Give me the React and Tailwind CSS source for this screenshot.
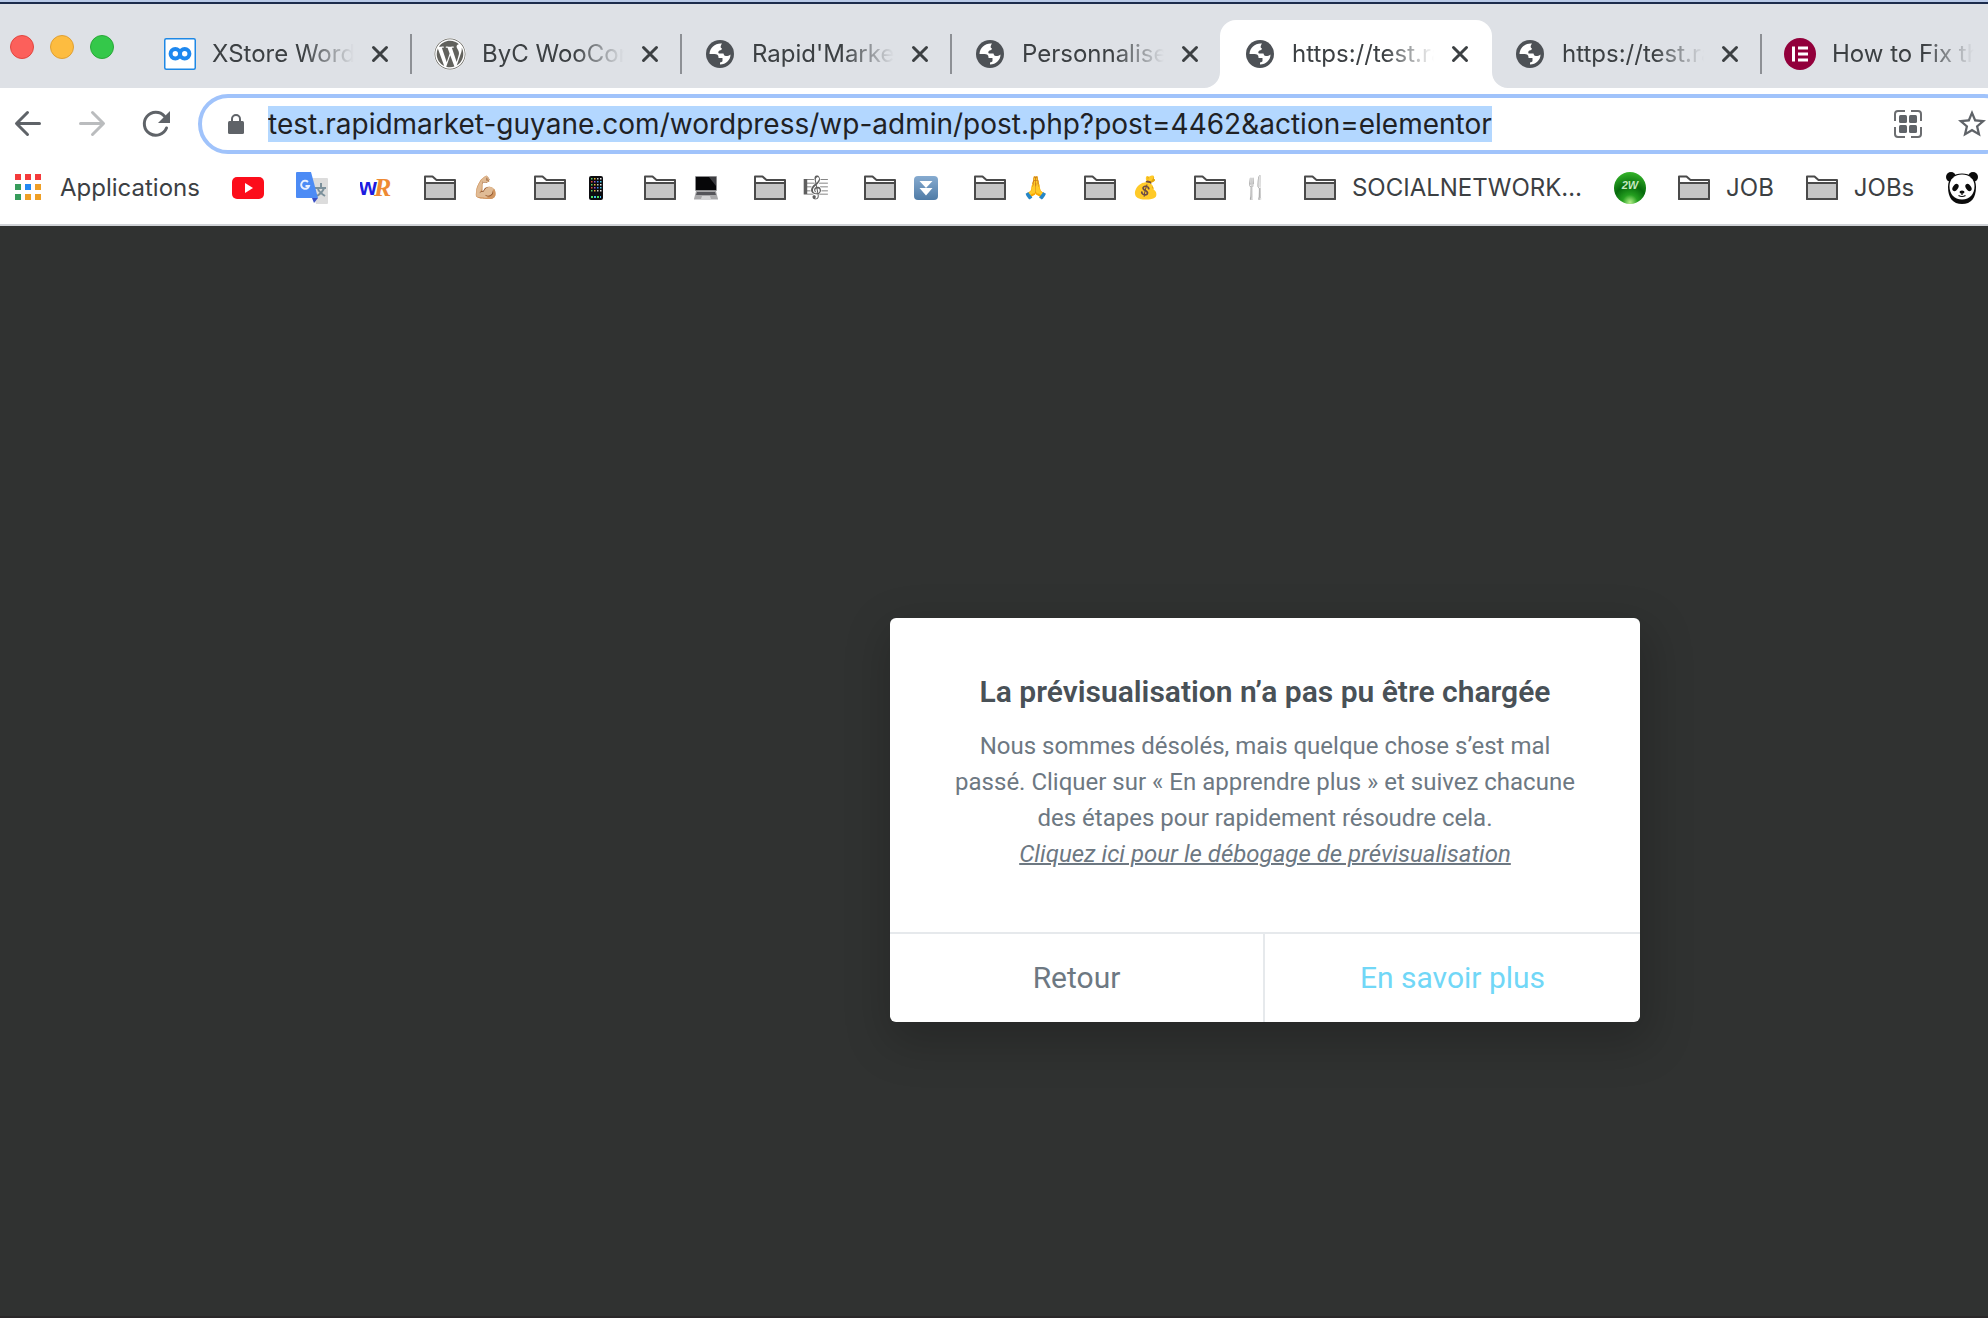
import React from 'react';
import clsx from 'clsx';
import { FaWordpress } from 'react-icons/fa';

const BOOKMARKS = [
  { id: 'apps', icon: AppsIcon, label: 'Applications' },
  { id: 'youtube', icon: YoutubeIcon, title: 'YouTube' },
  { id: 'translate', icon: TranslateIcon, title: 'Google Translate' },
  { id: 'wr', icon: WordReferenceIcon, title: 'WordReference' },
  { id: 'sport', icon: FolderIcon, emoji: '💪🏼' },
  { id: 'phone', icon: FolderIcon, mark: PhoneMark, title: 'Mobile' },
  { id: 'laptop', icon: FolderIcon, mark: LaptopMark, title: 'Laptop' },
  { id: 'music', icon: FolderIcon, emoji: '🎼', gray: true },
  { id: 'downloads', icon: FolderIcon, mark: DownMark, title: 'Downloads' },
  { id: 'thanks', icon: FolderIcon, emoji: '🙏' },
  { id: 'money', icon: FolderIcon, emoji: '💰' },
  { id: 'food', icon: FolderIcon, emoji: '🍴' },
  { id: 'social', icon: FolderIcon, label: 'SOCIALNETWORK…' },
  { id: 'green', icon: GreenBallIcon, title: '2W' },
  { id: 'job', icon: FolderIcon, label: 'JOB' },
  { id: 'jobs', icon: FolderIcon, label: 'JOBs' },
  { id: 'panda', icon: PandaIcon, title: 'Panda' },
];

const TABS = [
  { id: 1, icon: XStoreIcon, title: 'XStore WordPress' },
  { id: 2, icon: WordpressIcon, title: 'ByC WooCommerce', divider: true },
  { id: 3, icon: GlobeIcon, title: "Rapid'Market", divider: true },
  { id: 4, icon: GlobeIcon, title: 'Personnaliser', divider: true },
  { id: 5, icon: GlobeIcon, title: 'https://test.rapid', active: true },
  { id: 6, icon: GlobeIcon, title: 'https://test.rapid' },
  { id: 7, icon: ElementorIcon, title: 'How to Fix the', divider: true },
];

function XStoreIcon() {
  return (
    <svg viewBox="0 0 32 32" className="size-8">
      <rect x="0.75" y="0.75" width="30.5" height="30.5" rx="1.5" fill="#fff" stroke="#1e88e5" strokeWidth="1.5" />
      <g fill="none" stroke="#1e88ef" strokeWidth="4">
        <circle cx="11.3" cy="15.8" r="4.7" />
        <circle cx="20.7" cy="15.8" r="4.7" />
      </g>
    </svg>
  );
}

function WordpressIcon() {
  return (
    <span className="flex size-8 items-center justify-center rounded-full bg-white">
      <FaWordpress className="size-8 text-[#62625d]" />
    </span>
  );
}

function GlobeIcon() {
  return (
    <svg viewBox="-2 -2 32 32" className="size-8">
      <circle cx="14" cy="14" r="14" fill="#4d5156" />
      <path
        fill="#fff"
        d="M16 3.5C9.5 2.8 3.8 7.5 3.5 14H8.5C11 14 12.5 15 12.5 17V18H16.5V21C16.5 22 15 22 14 22.5V24.5C20 24.5 24.5 20 24.5 14.5C23 15.5 22 16 20 16C18 16 18 15 17.5 13.5H13C12 13.5 12 11 13.5 10.5C15 10.2 16 9.8 16 8.5C14.5 8 14 6.5 16 3.5Z"
      />
    </svg>
  );
}

function ElementorIcon() {
  return (
    <svg viewBox="0 0 32 32" className="size-8">
      <circle cx="16" cy="16" r="16" fill="#92003b" />
      <path fill="#fff" d="M8 8.5h3v15H8zM14 8.5h10v3H14zM14 14.5h10v3H14zM14 20.5h10v3H14z" />
    </svg>
  );
}

function AppsIcon() {
  return (
    <svg viewBox="0 0 32 32" className="size-8">
      <path fill="#f43b3b" d="M3 2h6v6H3zM13 2h6v6h-6zM23 2h6v6h-6z" />
      <path fill="#379c5b" d="M3 12h6v6H3zM3 22h6v6H3z" />
      <path fill="#2189f3" d="M13 12h6v6h-6z" />
      <path fill="#ef9f26" d="M23 12h6v6h-6zM13 22h6v6h-6zM23 22h6v6h-6z" />
    </svg>
  );
}

function YoutubeIcon() {
  return (
    <svg viewBox="0 0 32 32" className="size-8">
      <rect y="5" width="32" height="22" rx="5" fill="#fc0d1b" />
      <path fill="#fff" d="M13 11v10l8-5z" />
    </svg>
  );
}

function TranslateIcon() {
  return (
    <svg viewBox="0 0 32 32" className="size-8">
      <path fill="#dcdcdc" d="M13 6h18a1 1 0 0 1 1 1v24a1 1 0 0 1-1 1H20z" />
      <path fill="none" stroke="#7b909b" strokeWidth="2" d="M25 11v4M19 16h11M28 16c-1 4-4 6-7 8M22 17c1 3 4 5 7 7" />
      <path fill="#3a4fc4" d="M16 26h6l-4 5z" />
      <path fill="#4c8bf5" d="M1 0h14l7 26H1a1 1 0 0 1-1-1V1a1 1 0 0 1 1-1z" />
      <path fill="none" stroke="#e8f0fe" strokeWidth="2" d="M12 10a4 4 0 1 0 1 4H9.500" />
    </svg>
  );
}

function WordReferenceIcon() {
  return (
    <svg viewBox="0 0 32 32" className="size-8">
      <text x="-1" y="23" fontSize="23" fontWeight="700" fontFamily="Liberation Sans, sans-serif" fill="#1c1ce0">w</text>
      <text x="14" y="24" fontSize="26" fontWeight="700" fontStyle="italic" fontFamily="Liberation Serif, serif" fill="#ee8a33">R</text>
    </svg>
  );
}

function FolderIcon() {
  return (
    <svg viewBox="0 0 32 32" className="size-8" stroke="#4a4a4a" strokeWidth="2" strokeLinejoin="round">
      <path fill="#fff" d="M1 27V4.500H8.500L12.500 8H31V27Z" />
      <path fill="#c6c6c6" d="M1 11H31V27H1Z" />
    </svg>
  );
}

function GreenBallIcon() {
  return (
    <svg viewBox="0 0 32 32" className="size-8">
      <defs>
        <radialGradient id="ball" cx="50%" cy="95%" r="95%">
          <stop offset="0" stopColor="#b4f08a" />
          <stop offset="0.25" stopColor="#25a020" />
          <stop offset="0.55" stopColor="#066a0c" />
          <stop offset="1" stopColor="#35b52a" />
        </radialGradient>
      </defs>
      <circle cx="16" cy="16" r="16" fill="url(#ball)" />
      <text x="16" y="17" textAnchor="middle" fontSize="11" fontWeight="700" fontStyle="italic" fontFamily="Liberation Sans, sans-serif" fill="#c4e8be">2W</text>
    </svg>
  );
}

function PandaIcon() {
  return (
    <svg viewBox="0 0 32 32" className="size-8">
      <g fill="#0b0b0b">
        <circle cx="5" cy="5" r="5" />
        <circle cx="27" cy="5" r="5" />
        <path d="M2 15C2 6 8 1.500 16 1.500S30 6 30 15C30 26 25 32 16 32S2 26 2 15Z" />
      </g>
      <path fill="#fff" d="M3.500 14C3.500 7 9 2.500 16 2.500S28.500 7 28.500 14C28.500 22 24 27.500 16 27.500S3.500 22 3.500 14Z" />
      <g fill="#0b0b0b">
        <ellipse cx="9.500" cy="15.500" rx="2.500" ry="4" transform="rotate(35 9.500 15.500)" />
        <ellipse cx="22.500" cy="15.500" rx="2.500" ry="4" transform="rotate(-35 22.500 15.500)" />
        <ellipse cx="16" cy="20" rx="2.500" ry="1.500" />
      </g>
      <path fill="none" stroke="#0b0b0b" strokeWidth="1.200" d="M16 21v2M12.500 23.500q3.500 2 7 0" />
    </svg>
  );
}

function PhoneMark() {
  const colors = ['#5fd06a', '#e8e8e8', '#3a8df0', '#f0b73a', '#e0503c', '#49c5e8', '#c8c8c8', '#a154d8'];
  const cells = Array.from({ length: 20 }, (_, i) => ({ x: 7 + (i % 4) * 3, y: 2 + Math.floor(i / 4) * 3, c: colors[(i * 3) % 8] }));
  return (
    <svg viewBox="0 0 24 24" className="size-6">
      <rect x="5" width="14" height="24" rx="2" fill="#0c0c10" />
      {cells.map((c) => (
        <rect key={`${c.x}-${c.y}`} x={c.x} y={c.y} width="1.500" height="1.500" fill={c.c} />
      ))}
      <path fill="#4ade60" d="M7 20h2v2H7zM13 20h2v2h-2z" />
      <path fill="#46b7f0" d="M10 20h2v2h-2zM16 20h1v2h-1z" />
    </svg>
  );
}

function LaptopMark() {
  return (
    <svg viewBox="0 0 24 24" className="size-6">
      <rect x="1" width="22" height="15" rx="1" fill="#8d8d8f" />
      <rect x="2" y="1" width="20" height="13" fill="#060608" />
      <path fill="#3c3c40" d="M15 1h7v9z" />
      <path fill="#a8a8aa" d="M2 15h20l2 8H0z" />
      <path fill="#55555a" d="M3 16h18l1 3H2z" />
      <path fill="#d4d4d6" d="M8 20h8l1 3H7zM0 23h24v1H0z" />
    </svg>
  );
}

function DownMark() {
  return (
    <svg viewBox="0 0 24 24" className="size-6">
      <defs>
        <linearGradient id="down" x1="0" y1="0" x2="0" y2="1">
          <stop offset="0" stopColor="#86abd0" />
          <stop offset="1" stopColor="#4f7ba6" />
        </linearGradient>
      </defs>
      <rect width="24" height="24" rx="4" fill="url(#down)" />
      <path fill="#fff" d="M5.500 5h13L12 12zM5.500 12h13L12 19.500z" />
    </svg>
  );
}

function Flare({ className }) {
  return (
    <svg viewBox="0 0 16 16" className={clsx('absolute bottom-0 size-4', className)}>
      <path fill="#fff" d="M0 16A16 16 0 0 0 16 0V16Z" />
    </svg>
  );
}

function Tab({ tab }) {
  const Icon = tab.icon;
  return (
    <div
      className={clsx(
        'relative flex h-[68px] shrink-0 items-center',
        tab.active ? '-mr-[2px] w-[272px] rounded-t-2xl bg-white' : 'w-[270px]'
      )}
    >
      {tab.active ? (
        <>
          <Flare className="-left-4" />
          <Flare className="-right-4 -scale-x-100" />
        </>
      ) : null}
      <span className={clsx('mr-[22px] h-10 w-[2px] shrink-0', tab.divider && 'bg-[#8d9095]')} />
      <span className="shrink-0">
        <Icon />
      </span>
      <span className="ml-4 w-[142px] shrink-0 overflow-hidden text-2xl whitespace-nowrap text-[#3c4043] [mask-image:linear-gradient(to_right,#000_65%,transparent_100%)]">
        {tab.title}
      </span>
      <button type="button" aria-label="Fermer" className="ml-4 size-5 shrink-0">
        <svg viewBox="0 0 20 20" className="size-5" fill="none" stroke="#3c4043" strokeWidth="3" strokeLinecap="round">
          <path d="M3.500 3.500L16.500 16.500M16.500 3.500L3.500 16.500" />
        </svg>
      </button>
    </div>
  );
}

function TabStrip() {
  return (
    <div className="flex bg-[#dee1e6]">
      <div className="flex shrink-0 items-center gap-4 pt-[2px] pr-[26px] pl-[10px]">
        <span className="size-6 rounded-full border border-[#e2463f] bg-[#fc605b]" />
        <span className="size-6 rounded-full border border-[#e0a033] bg-[#fdbc40]" />
        <span className="size-6 rounded-full border border-[#29a838] bg-[#34c84a]" />
      </div>
      <div className="flex pt-4">
        {TABS.map((tab) => (
          <Tab key={tab.id} tab={tab} />
        ))}
      </div>
    </div>
  );
}

function Toolbar() {
  return (
    <div className="-mr-[26px] flex items-center pt-[6px] pl-3">
      <nav className="mr-[26px] flex shrink-0 gap-8">
        <button type="button" aria-label="Précédent" className="size-8">
          <svg viewBox="0 0 32 32" fill="none" stroke="#5f6368" strokeWidth="3" strokeLinecap="round" strokeLinejoin="round">
            <path d="M27.500 15.500H5M15.500 4.500L4.500 15.500L15.500 26.500" />
          </svg>
        </button>
        <button type="button" aria-label="Suivant" className="size-8">
          <svg viewBox="0 0 32 32" fill="none" stroke="#babcbe" strokeWidth="3" strokeLinecap="round" strokeLinejoin="round">
            <path d="M4.500 15.500H27M16.500 4.500L27.500 15.500L16.500 26.500" />
          </svg>
        </button>
        <button type="button" aria-label="Actualiser" className="size-8">
          <svg viewBox="0 0 32 32">
            <path fill="none" stroke="#5f6368" strokeWidth="3" strokeLinecap="round" d="M26.500 20A11.500 11.500 0 1 1 24.500 8.200" />
            <path fill="#5f6368" d="M30 3V15H18Z" />
          </svg>
        </button>
      </nav>
      <div className="flex h-[60px] flex-1 items-center rounded-full border-4 border-[#a0c3fb] bg-white pr-6 pl-[26px]">
        <svg viewBox="0 0 16 20" className="mr-6 h-5 w-4 shrink-0">
          <rect y="7" width="16" height="13" rx="1.500" fill="#5f6368" />
          <path fill="none" stroke="#5f6368" strokeWidth="2" d="M4 8V5a4 4 0 0 1 8 0v3" />
        </svg>
        <input
          type="text"
          aria-label="Adresse"
          defaultValue="test.rapidmarket-guyane.com/wordpress/wp-admin/post.php?post=4462&action=elementor"
          className="field-sizing-content h-9 bg-[#b3d7ff] text-[28px] text-[#202124] outline-none"
        />
        <div className="ml-auto flex shrink-0 gap-9">
          <button type="button" aria-label="QR code" className="size-7">
            <svg viewBox="0 0 28 28">
              <path
                fill="none"
                stroke="#6b6d70"
                strokeWidth="2"
                d="M1 11V4a3 3 0 0 1 3-3h7M17 1h7a3 3 0 0 1 3 3v7M27 17v7a3 3 0 0 1-3 3h-7M11 27H4a3 3 0 0 1-3-3v-7"
              />
              <g fill="#5f6368">
                <rect x="5" y="5" width="8" height="8" rx="1.500" />
                <rect x="15" y="5" width="8" height="8" rx="1.500" />
                <rect x="5" y="15" width="8" height="8" rx="1.500" />
                <rect x="15" y="15" width="8" height="8" rx="1.500" />
              </g>
            </svg>
          </button>
          <button type="button" aria-label="Ajouter aux favoris" className="size-7">
            <svg viewBox="2 2 20 20" fill="#5f6368">
              <path d="M22 9.240l-7.190-.62L12 2 9.190 8.630 2 9.240l5.460 4.730L5.820 21 12 17.270 18.180 21l-1.630-7.030L22 9.240zM12 15.400l-3.760 2.270 1-4.280-3.320-2.880 4.380-.38L12 6.100l1.710 4.040 4.380.38-3.320 2.880 1 4.280L12 15.400z" />
            </svg>
          </button>
        </div>
      </div>
    </div>
  );
}

function BookmarksBar() {
  return (
    <div className="flex h-[72px] items-center gap-8 border-b-2 border-[#d0d3d7] pb-[2px] pl-3">
      {BOOKMARKS.map(({ id, icon: Icon, mark: Mark, label, emoji, gray, title }) => (
        <a key={id} href="#" aria-label={title} className="flex shrink-0 items-center gap-4 text-2xl whitespace-nowrap text-[#3c4043]">
          <Icon />
          {label ? <span>{label}</span> : null}
          {emoji ? (
            <span className={clsx('flex w-[30px] justify-center pr-[2px] text-[22px]', gray && 'contrast-150 grayscale')}>{emoji}</span>
          ) : null}
          {Mark ? (
            <span className="flex w-[30px] justify-center pr-[2px]">
              <Mark />
            </span>
          ) : null}
        </a>
      ))}
    </div>
  );
}

function PreviewErrorDialog() {
  return (
    <div
      role="dialog"
      aria-labelledby="dialog-title"
      className="w-[750px] overflow-hidden rounded-md bg-white font-[Roboto,sans-serif] shadow-[4px_16px_46px_6px_rgba(0,0,0,0.2)]"
    >
      <div className="px-[60px] pt-14 pb-[60px] text-center text-2xl leading-9 text-[#6d7882]">
        <h1 id="dialog-title" className="mb-[18px] text-3xl leading-9 font-semibold text-[#495157]">
          La prévisualisation n’a pas pu être chargée
        </h1>
        <p>
          Nous sommes désolés, mais quelque chose s’est mal passé. Cliquer sur «&nbsp;En apprendre plus&nbsp;» et suivez
          chacune des étapes pour rapidement résoudre cela.
        </p>
        <a href="#" className="italic underline decoration-2">
          Cliquez ici pour le débogage de prévisualisation
        </a>
      </div>
      <div className="flex h-[90px] border-t-2 border-[#e6e9ec] text-3xl">
        <button type="button" className="w-1/2 border-r-2 border-[#e6e9ec] text-[#6d7882]">
          Retour
        </button>
        <button type="button" className="w-1/2 text-[#71d7f7]">
          En savoir plus
        </button>
      </div>
    </div>
  );
}

export default function App() {
  return (
    <div className="flex min-h-screen flex-col overflow-hidden bg-white font-[Inter,sans-serif]">
      <div className="h-1 border-t-2 border-b-2 border-t-[#b9cae8] border-b-[#1c2c4c]" />
      <TabStrip />
      <Toolbar />
      <BookmarksBar />
      <main className="flex flex-1 items-center justify-center border-b-2 border-[#2a2829] bg-[#303231] pt-[98px] pl-[542px]">
        <PreviewErrorDialog />
      </main>
    </div>
  );
}
